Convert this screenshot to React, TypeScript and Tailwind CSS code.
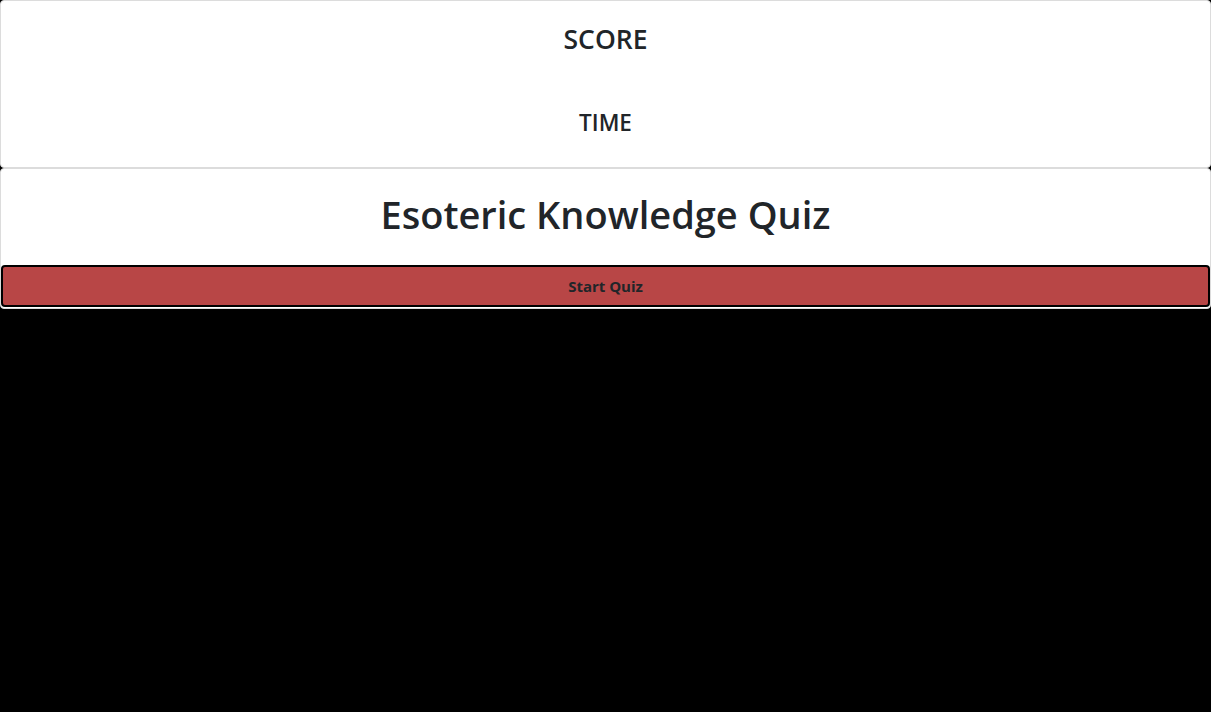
export default function App() {
  return (
    <div
      className="min-h-[712px] w-full bg-black text-[#212529]"
      style={{ fontFamily: '"Open Sans", "Noto Sans", sans-serif' }}
    >
      <div className="flex h-[168px] flex-col items-center rounded-[4px] border border-[#dcdcdc] bg-white">
        <h3 className="mt-[18px] text-[26.5px] font-semibold leading-[40px]">SCORE</h3>
        <h4 className="mt-[46px] text-[22.5px] font-semibold leading-[36px]">TIME</h4>
      </div>
      <div className="flex h-[141px] flex-col rounded-[4px] border border-[#dcdcdc] bg-white">
        <h1 className="mt-[21px] text-center text-[38px] font-semibold leading-[48px]">
          Esoteric Knowledge Quiz
        </h1>
        <button className="mt-[27px] h-[42px] w-full rounded-[4px] border-2 border-black bg-[#b84646] text-[15px] font-bold text-[#212529]">
          Start Quiz
        </button>
      </div>
    </div>
  );
}
